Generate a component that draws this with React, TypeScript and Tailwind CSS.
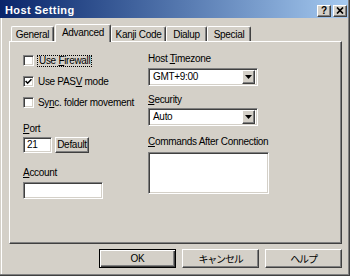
import React from "react";

const raised =
  "border border-t-white border-l-white border-r-[#404040] border-b-[#404040] shadow-[inset_-1px_-1px_0_#808080]";
const sunken =
  "border border-t-[#808080] border-l-[#808080] border-r-white border-b-white shadow-[inset_1px_1px_0_#404040,inset_-1px_-1px_0_#d4d0c8]";

function U({ children }: { children: React.ReactNode }) {
  return <span className="underline underline-offset-[1px]">{children}</span>;
}

function Check({ checked, children, focus }: { checked?: boolean; children: React.ReactNode; focus?: boolean }) {
  return (
    <div className="h-[11px] flex items-center whitespace-nowrap">
      <div className={`w-[11px] h-[11px] shrink-0 bg-white flex items-center justify-center ${sunken}`}>
        {checked && (
          <svg width="7" height="7" viewBox="0 0 7 7">
            <polyline points="0.6,3 2.6,5.2 6.5,1.2" fill="none" stroke="#000" strokeWidth="1.6" />
          </svg>
        )}
      </div>
      {focus ? (
        <span className="ml-[3px] px-[1px] border border-dotted border-black leading-[10px] h-[12px] inline-block">
          {children}
        </span>
      ) : (
        <span className="ml-[4px]">{children}</span>
      )}
    </div>
  );
}

function Combo({ value }: { value: string }) {
  return (
    <div className={`w-[110px] h-[18px] bg-white flex items-center p-[2px] ${sunken}`}>
      <span className="flex-1 pl-[2px]">{value}</span>
      <div className={`w-[13px] h-[14px] bg-[#d4d0c8] flex items-center justify-center ${raised}`}>
        <svg width="7" height="4" viewBox="0 0 7 4">
          <polygon points="0,0 7,0 3.5,4" fill="#000" />
        </svg>
      </div>
    </div>
  );
}

function Tab({ children, w, selected }: { children: React.ReactNode; w: string; selected?: boolean }) {
  return selected ? (
    <div
      className={`${w} h-[18px] -mb-[1px] relative z-10 bg-[#d4d0c8] whitespace-nowrap flex items-center justify-center pb-[2px] border-t border-l border-r border-t-white border-l-white border-r-[#404040] shadow-[inset_-1px_0_0_#808080] rounded-tl-[2px] rounded-tr-[2px]`}
    >
      {children}
    </div>
  ) : (
    <div
      className={`${w} h-[15px] whitespace-nowrap flex items-center justify-center pt-[1px] border-t border-l border-r border-t-white border-l-white border-r-[#404040] shadow-[inset_-1px_0_0_#808080] rounded-tl-[2px] rounded-tr-[2px]`}
    >
      {children}
    </div>
  );
}

function Btn({ children, def, jp }: { children: React.ReactNode; def?: boolean; jp?: boolean }) {
  const txt = jp ? "font-['Noto_Sans_CJK_JP',sans-serif] text-[10px] tracking-[-1.2px]" : "";
  if (def) {
    return (
      <div className="w-[77px] h-[19px] border border-black shadow-[inset_1px_1px_0_#fff,inset_-1px_-1px_0_#404040,inset_-2px_-2px_0_#808080] flex items-center justify-center">
        <span className={txt}>{children}</span>
      </div>
    );
  }
  return (
    <div className={`w-[77px] h-[19px] flex items-center justify-center ${raised}`}>
      <span className={txt}>{children}</span>
    </div>
  );
}

export default function App() {
  return (
    <div className="w-[350px] h-[276px] bg-[#d4d0c8] pr-[2px] pb-[2px] shadow-[inset_-1px_-1px_0_#404040,inset_-2px_-2px_0_#808080] flex flex-col font-['Liberation_Sans',Arial,sans-serif] text-[10px] tracking-[-0.3px] leading-[12px] text-black">
      {/* Title bar */}
      <div className="h-[18px] shrink-0 flex items-center bg-gradient-to-r from-[#0a246a] to-[#a6caf0] pl-[5px] pr-[1px]">
        <span className="font-bold text-white text-[11px] tracking-[0.4px] pt-[1px]">Host Setting</span>
        <div className="ml-auto flex gap-[2px] mt-[3px]">
          <div className={`w-[14px] h-[12px] bg-[#d4d0c8] flex items-center justify-center ${raised}`}>
            <span className="font-bold text-[10px] leading-[10px] tracking-normal">?</span>
          </div>
          <div className={`w-[14px] h-[12px] bg-[#d4d0c8] flex items-center justify-center ${raised}`}>
            <svg width="8" height="7" viewBox="0 0 8 7">
              <path d="M1 0.5 L7 6.5 M7 0.5 L1 6.5" stroke="#000" strokeWidth="1.7" />
            </svg>
          </div>
        </div>
      </div>

      {/* Body */}
      <div className="flex-1 flex flex-col border-l border-l-[#d4d0c8] shadow-[inset_1px_0_0_#fff] pl-[8px]">
        {/* Tabs */}
        <div className="mt-[6px] h-[17px] flex items-end pl-[2px]">
          <Tab w="w-[43px]">General</Tab>
          <div className="w-[1px]" />
          <Tab w="w-[56px]" selected>
            Advanced
          </Tab>
          <Tab w="w-[55px]">Kanji Code</Tab>
          <Tab w="w-[41px]">Dialup</Tab>
          <Tab w="w-[44px]">Special</Tab>
        </div>

        {/* Panel */}
        <div className={`w-[333px] h-[203px] flex ${raised}`}>
          {/* Left column */}
          <div className="w-[138px] pl-[13px] pt-[13px] flex flex-col">
            <Check focus>
              Use <U>F</U>irewall
            </Check>
            <div className="mt-[10px]">
              <Check checked>
                Use PAS<U>V</U> mode
              </Check>
            </div>
            <div className="mt-[10px]">
              <Check>
                Sy<U>n</U>c. folder movement
              </Check>
            </div>
            <div className="mt-[15px] h-[12px]">
              <U>P</U>ort
            </div>
            <div className="mt-[2px] flex items-center">
              <div className={`w-[29px] h-[16px] bg-white flex items-center pl-[3px] ${sunken}`}>21</div>
              <div className={`ml-[3px] w-[34px] h-[16px] flex items-center justify-center ${raised}`}>Default</div>
            </div>
            <div className="mt-[14px] h-[12px]">
              <U>A</U>ccount
            </div>
            <div className={`mt-[3px] w-[80px] h-[17px] bg-white ${sunken}`} />
          </div>

          {/* Right column */}
          <div className="flex-1 pt-[11px] flex flex-col whitespace-nowrap">
            <div className="h-[12px]">
              Host <U>T</U>imezone
            </div>
            <div className="mt-[3px]">
              <Combo value="GMT+9:00" />
            </div>
            <div className="mt-[8px] h-[12px]">
              <U>S</U>ecurity
            </div>
            <div className="mt-[2px]">
              <Combo value="Auto" />
            </div>
            <div className="mt-[10px] h-[12px]">
              <U>C</U>ommands After Connection
            </div>
            <div className={`mt-[4px] w-[121px] h-[42px] bg-white ${sunken}`} />
          </div>
        </div>

        {/* Buttons */}
        <div className="mt-[5px] flex gap-[6px] pl-[90px]">
          <Btn def>OK</Btn>
          <Btn jp>キャンセル</Btn>
          <Btn jp>ヘルプ</Btn>
        </div>
      </div>
    </div>
  );
}
